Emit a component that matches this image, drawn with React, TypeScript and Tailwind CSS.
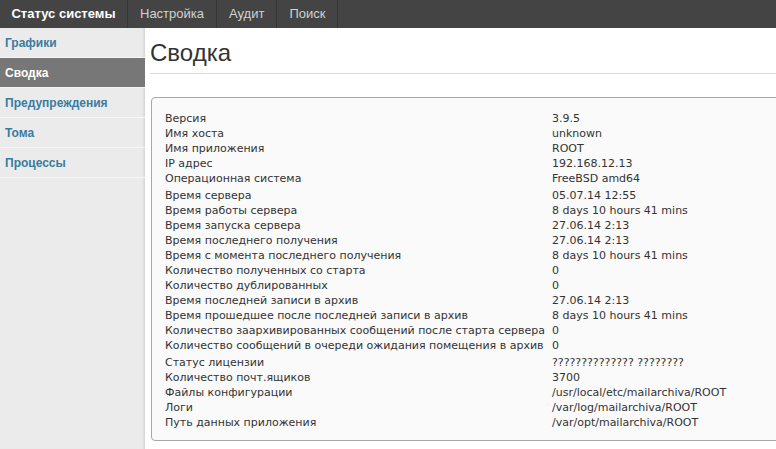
import React from 'react';

const tabs = ['Статус системы', 'Настройка', 'Аудит', 'Поиск'];
const menu = ['Графики', 'Сводка', 'Предупреждения', 'Тома', 'Процессы'];

const groups: [string, string][][] = [
  [
    ['Версия', '3.9.5'],
    ['Имя хоста', 'unknown'],
    ['Имя приложения', 'ROOT'],
    ['IP адрес', '192.168.12.13'],
    ['Операционная система', 'FreeBSD amd64'],
  ],
  [
    ['Время сервера', '05.07.14 12:55'],
    ['Время работы сервера', '8 days 10 hours 41 mins'],
    ['Время запуска сервера', '27.06.14 2:13'],
    ['Время последнего получения', '27.06.14 2:13'],
    ['Время с момента последнего получения', '8 days 10 hours 41 mins'],
    ['Количество полученных со старта', '0'],
    ['Количество дублированных', '0'],
    ['Время последней записи в архив', '27.06.14 2:13'],
    ['Время прошедшее после последней записи в архив', '8 days 10 hours 41 mins'],
    ['Количество заархивированных сообщений после старта сервера', '0'],
    ['Количество сообщений в очереди ожидания помещения в архив', '0'],
  ],
  [
    ['Статус лицензии', '?????????????? ????????'],
    ['Количество почт.ящиков', '3700'],
    ['Файлы конфигурации', '/usr/local/etc/mailarchiva/ROOT'],
    ['Логи', '/var/log/mailarchiva/ROOT'],
    ['Путь данных приложения', '/var/opt/mailarchiva/ROOT'],
  ],
];

export default function App() {
  return (
    <div className="w-[776px] h-[449px] overflow-hidden bg-white flex flex-col font-['Liberation_Sans',Arial,sans-serif]">
      {/* top nav */}
      <div className="h-[28px] bg-[#444444] flex shrink-0">
        {tabs.map((t, i) => (
          <div
            key={t}
            className={
              i === 0
                ? 'h-full flex items-center justify-center whitespace-nowrap w-[128px] border-r border-[#353535] text-[13px] font-bold text-white'
                : 'h-full flex items-center whitespace-nowrap px-[12px] border-r border-[#353535] text-[13px] text-[#d2d2d2]'
            }
          >
            {t}
          </div>
        ))}
      </div>

      <div className="flex flex-1 min-h-0">
        {/* sidebar */}
        <div className="w-[145px] shrink-0 bg-[#ebebeb] shadow-[inset_-3px_0_3px_-2px_rgba(0,0,0,0.12)]">
          {menu.map((m) => (
            <div
              key={m}
              className={
                m === 'Сводка'
                  ? 'h-[30px] flex items-center pl-[5px] bg-[#777777] text-white text-[12px] font-bold border-b border-[#f6f6f6]'
                  : 'h-[30px] flex items-center pl-[5px] text-[#3a7ca0] text-[12px] font-bold border-b border-[#f6f6f6]'
              }
            >
              {m}
            </div>
          ))}
        </div>

        {/* main */}
        <div className="flex-1 min-w-0 overflow-hidden pl-[5px]">
          <h1 className="pt-[11px] h-[45px] text-[24px] leading-[28px] text-[#333333]">Сводка</h1>
          <div className="border-t border-[#dcdcdc] w-[700px]" />
          <div className="mt-[23px] ml-[1px] w-[700px] border border-[#a8a8a8] rounded-[4px] bg-[#fafafa] pt-[13px] pb-[10px] pl-[13px] font-['DejaVu_Sans',Verdana,sans-serif] text-[11px] leading-[15px] text-[#333333]">
            {groups.map((g, gi) => (
              <div key={gi} className={gi > 0 ? 'mt-[2px]' : ''}>
                {g.map(([k, v]) => (
                  <div key={k} className="flex whitespace-nowrap">
                    <div className="w-[387px] shrink-0">{k}</div>
                    <div>{v}</div>
                  </div>
                ))}
              </div>
            ))}
          </div>
        </div>
      </div>
    </div>
  );
}
